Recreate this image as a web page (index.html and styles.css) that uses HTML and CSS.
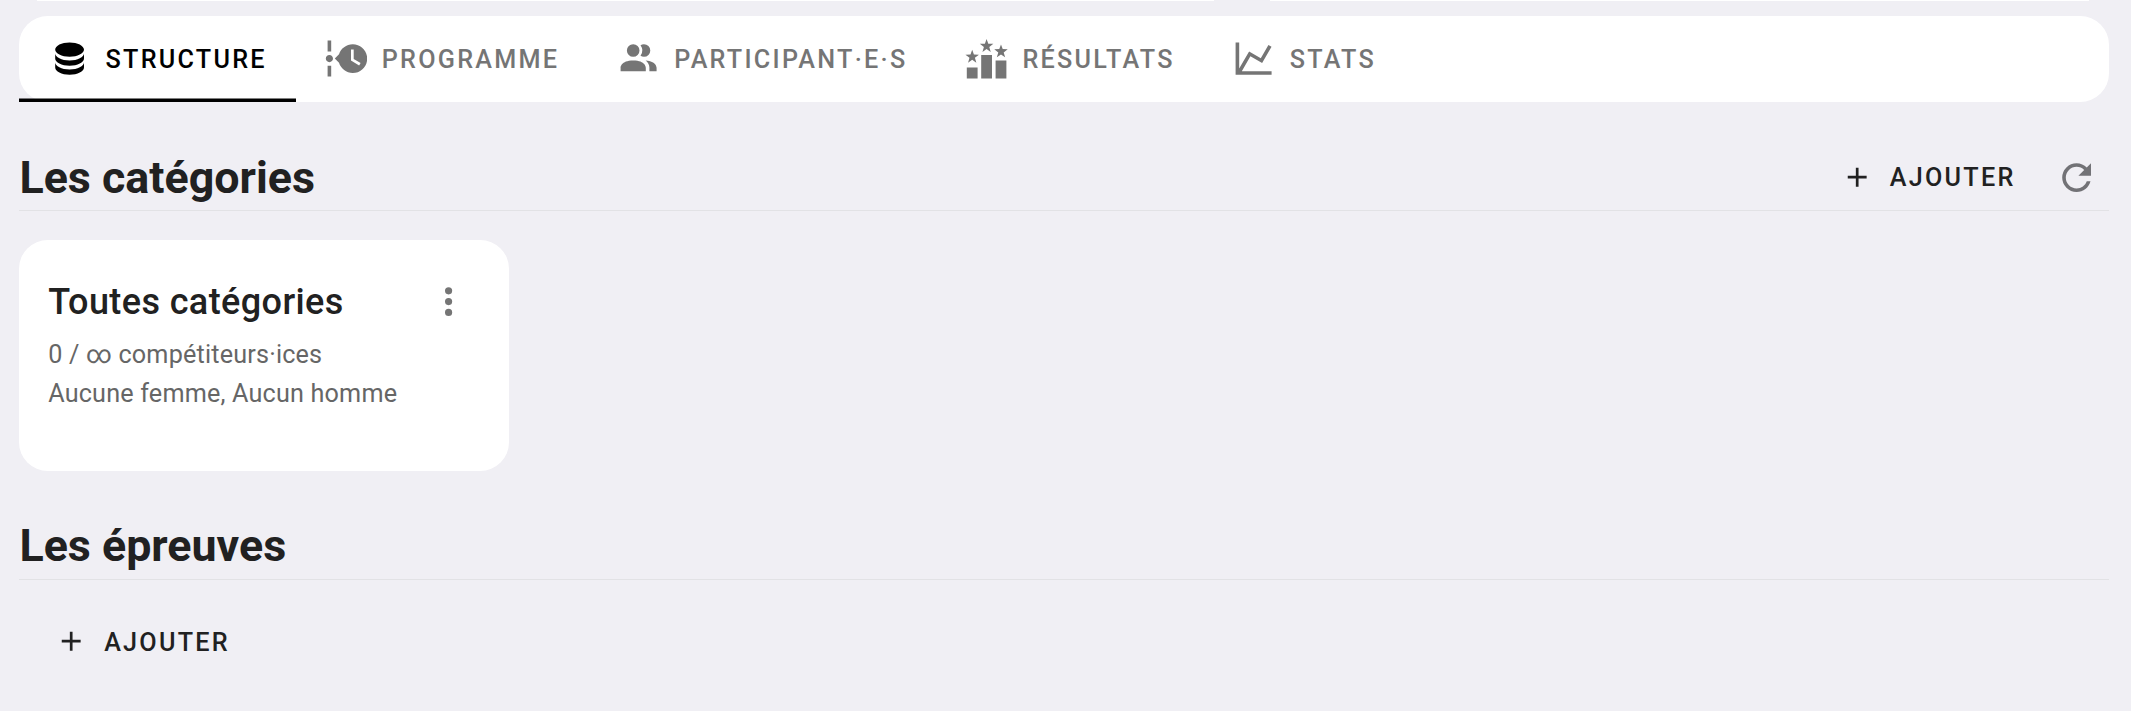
FILE: index.html
```html
<!DOCTYPE html>
<html lang="fr">
<head>
<meta charset="utf-8">
<title>Structure</title>
<link rel="stylesheet" href="styles.css">
</head>
<body>
<div class="summary"><div class="summary-card"></div><div class="summary-card"></div></div>
<nav class="tabs">
  <a class="tab active"><svg class="icon" viewBox="0 0 24 24"><path d="M12,3C7.58,3 4,4.79 4,7C4,9.21 7.58,11 12,11C16.42,11 20,9.21 20,7C20,4.79 16.42,3 12,3M4,9V12C4,14.21 7.58,16 12,16C16.42,16 20,14.21 20,12V9C20,11.21 16.42,13 12,13C7.58,13 4,11.21 4,9M4,14V17C4,19.21 7.58,21 12,21C16.42,21 20,19.21 20,17V14C20,16.21 16.42,18 12,18C7.58,18 4,16.21 4,14Z"/></svg><span>STRUCTURE</span></a>
  <a class="tab"><svg class="icon" viewBox="0 0 24 24"><path d="M4,2V8H2V2H4M2,22V16H4V22H2M5,12C5,13.11 4.11,14 3,14C1.89,14 1,13.11 1,12C1,10.89 1.89,10 3,10C4.11,10 5,10.89 5,12M16,4C20.42,4 24,7.58 24,12C24,16.42 20.42,20 16,20C12.4,20 9.36,17.62 8.35,14.35L6,12L8.35,9.65C9.36,6.38 12.4,4 16,4M15,13L19.53,15.79L20.33,14.5L16.5,12.2V7H15V13Z"/></svg><span>PROGRAMME</span></a>
  <a class="tab"><svg class="icon" viewBox="0 0 24 24"><path d="M16 17V19H2V17S2 13 9 13 16 17 16 17M12.5 7.5A3.5 3.5 0 1 0 9 11A3.5 3.5 0 0 0 12.5 7.5M15.94 13A5.32 5.32 0 0 1 18 17V19H22V17S22 13.37 15.94 13M15 4A3.39 3.39 0 0 0 13.07 4.59A5 5 0 0 1 13.07 10.41A3.39 3.39 0 0 0 15 11A3.5 3.5 0 0 0 15 4Z"/></svg><span>PARTICIPANT·E·S</span></a>
  <a class="tab"><svg class="icon" viewBox="0 0 24 24"><defs><path id="star" d="M0,-3.9L.95,-1.3L3.75,-1.2L1.5,.55L2.3,3.3L0,1.7L-2.3,3.3L-1.5,.55L-3.75,-1.2L-.95,-1.3Z"/></defs><path d="M1,17H7V23H1ZM9,10H15V23H9ZM17,13H23V23H17Z"/><use href="#star" x="4" y="11"/><use href="#star" x="12" y="5"/><use href="#star" x="20" y="8"/></svg><span>RÉSULTATS</span></a>
  <a class="tab"><svg class="icon" viewBox="0 0 24 24"><path d="M16,11.78L20.24,4.45L21.97,5.45L16.74,14.5L10.23,10.75L5.46,19H22V21H2V3H4V17.54L9.5,8L16,11.78Z"/></svg><span>STATS</span></a>
</nav>
<main>
  <section class="categories">
    <header class="section-header">
      <h2>Les catégories</h2>
      <div class="actions">
        <button class="add"><svg class="icon small" viewBox="0 0 24 24"><path d="M19,13H13V19H11V13H5V11H11V5H13V11H19V13Z"/></svg><span>AJOUTER</span></button>
        <button class="refresh" aria-label="Actualiser"><svg class="icon" viewBox="0 0 24 24"><path d="M17.65,6.35C16.2,4.9 14.21,4 12,4A8,8 0 0,0 4,12A8,8 0 0,0 12,20C15.73,20 18.84,17.45 19.73,14H17.65C16.83,16.33 14.61,18 12,18A6,6 0 0,1 6,12A6,6 0 0,1 12,6C13.66,6 15.14,6.69 16.22,7.78L13,11H20V4L17.65,6.35Z"/></svg></button>
      </div>
    </header>
    <article class="card">
      <div class="card-title"><h3>Toutes catégories</h3><button class="menu" aria-label="Menu"><svg class="icon" viewBox="0 0 24 24"><path d="M12,16A2,2 0 0,1 14,18A2,2 0 0,1 12,20A2,2 0 0,1 10,18A2,2 0 0,1 12,16M12,10A2,2 0 0,1 14,12A2,2 0 0,1 12,14A2,2 0 0,1 10,12A2,2 0 0,1 12,10M12,4A2,2 0 0,1 14,6A2,2 0 0,1 12,8A2,2 0 0,1 10,6A2,2 0 0,1 12,4Z"/></svg></button></div>
      <p>0 / ∞ compétiteurs·ices</p>
      <p>Aucune femme, Aucun homme</p>
    </article>
  </section>
  <section class="events">
    <header class="section-header"><h2>Les épreuves</h2></header>
    <button class="add"><svg class="icon small" viewBox="0 0 24 24"><path d="M19,13H13V19H11V13H5V11H11V5H13V11H19V13Z"/></svg><span>AJOUTER</span></button>
  </section>
</main>
</body>
</html>
```
FILE: styles.css
```css
* { box-sizing: border-box; }
body {
  margin: 0;
  height: 711px;
  padding: 0 21.8px 0 19.4px;
  background: #f0eff4;
  color: #212121;
  font-family: Roboto, "Liberation Sans", sans-serif;
  overflow: hidden;
}
h2, h3, p { margin: 0; }
button { border: 0; padding: 0; background: none; color: inherit; font: inherit; }
.icon { width: 43.2px; height: 43.2px; fill: currentColor; flex: none; display: block; }
.icon.small { width: 32.4px; height: 32.4px; }

.summary {
  height: 15.5px;
  padding-bottom: 14.5px;
  display: grid;
  grid-template-columns: 1208px 1fr;
  column-gap: 29px;
}
.summary-card { height: 1px; margin: 0 13px 0 18px; background: #fff; }
.summary-card + .summary-card { margin: 0 20px 0 14px; }

.tabs { display: flex; height: 86.4px; background: #fff; border-radius: 28.8px; }
.tab {
  display: flex;
  align-items: center;
  gap: 14.4px;
  padding: 0 28.8px 0 28.6px;
  color: #757575;
}
.tab.active { color: #000; box-shadow: inset 0 -3.6px #000; }
.tab span, .add span {
  padding-top: 2px;
  font-size: 25.2px;
  font-weight: 500;
  letter-spacing: 2.25px;
  line-height: 32px;
}

.categories { padding-top: 43px; }
.section-header {
  display: flex;
  align-items: center;
  justify-content: space-between;
  height: 66px;
  border-bottom: 1px solid #e2e2e5;
}
h2 { padding-top: 2px; font-size: 44.8px; font-weight: 700; line-height: 64px; }
.actions { display: flex; align-items: center; }
.add { display: flex; align-items: center; gap: 16.4px; }
.refresh { margin: 0 11px 0 39.5px; color: #727276; }

.card {
  width: 490px;
  height: 230.4px;
  margin-top: 29.4px;
  padding: 28.8px;
  background: #fff;
  border-radius: 28.8px;
}
.card-title { display: flex; align-items: center; justify-content: space-between; height: 66px; }
h3 { font-size: 36px; font-weight: 500; letter-spacing: .4px; line-height: 58px; }
.menu { margin-right: 10.5px; color: #757575; }
.card p { color: #666; font-size: 25.2px; letter-spacing: .18px; line-height: 39.4px; }

.events { padding-top: 43px; }
.events h2 { padding-top: 0; }
.events .add { margin: 45px 0 0 36px; }
```
